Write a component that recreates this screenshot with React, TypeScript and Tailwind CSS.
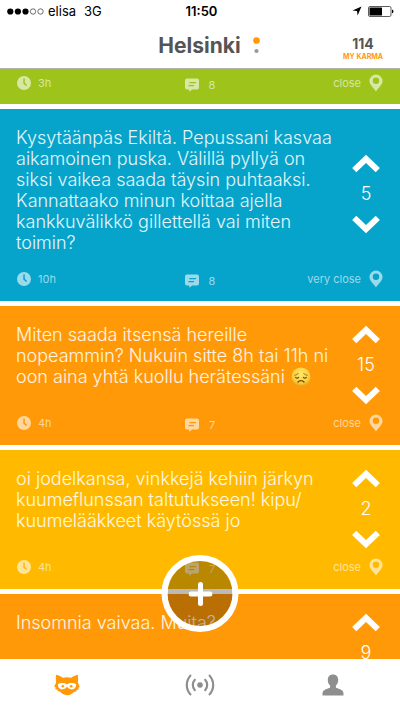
import React from "react";

type Tone = "green" | "blue" | "orange" | "yellow";

interface PostMeta {
  age: string;
  replies: number;
  distance: string;
}

interface Post {
  id: number;
  tone: Tone;
  lines: string[];
  sad?: boolean;
  votes: number;
  meta?: PostMeta;
}

const toneClass: Record<Tone, string> = {
  green: "bg-[#9ec41c]",
  blue: "bg-[#06a3cb]",
  orange: "bg-[#ff9908]",
  yellow: "bg-[#ffba00]",
};

const posts: Post[] = [
  {
    id: 1,
    tone: "blue",
    lines: [
      "Kysytäänpäs Ekiltä. Pepussani kasvaa",
      "aikamoinen puska. Välillä pyllyä on",
      "siksi vaikea saada täysin puhtaaksi.",
      "Kannattaako minun koittaa ajella",
      "kankkuvälikkö gillettellä vai miten",
      "toimin?",
    ],
    votes: 5,
    meta: { age: "10h", replies: 8, distance: "very close" },
  },
  {
    id: 2,
    tone: "orange",
    lines: [
      "Miten saada itsensä hereille",
      "nopeammin? Nukuin sitte 8h tai 11h ni",
      "oon aina yhtä kuollu herätessäni",
    ],
    sad: true,
    votes: 15,
    meta: { age: "4h", replies: 7, distance: "close" },
  },
  {
    id: 3,
    tone: "yellow",
    lines: [
      "oi jodelkansa, vinkkejä kehiin järkyn",
      "kuumeflunssan taltutukseen! kipu/",
      "kuumelääkkeet käytössä jo",
    ],
    votes: 2,
    meta: { age: "4h", replies: 7, distance: "close" },
  },
  {
    id: 4,
    tone: "orange",
    lines: ["Insomnia vaivaa. Muita?"],
    votes: 9,
  },
];

function ClockIcon() {
  return (
    <svg viewBox="0 0 14 14" className="size-3.5" aria-hidden="true">
      <path
        fill="currentColor"
        fillRule="evenodd"
        d="M7 0a7 7 0 1 0 0 14A7 7 0 0 0 7 0ZM6.3 2.6h1.5v4.2l2.3 2.1-1 1.1-2.8-2.5Z"
      />
    </svg>
  );
}

function CommentIcon() {
  return (
    <svg viewBox="0 0 14 14" className="size-3.5" aria-hidden="true">
      <path
        fill="currentColor"
        fillRule="evenodd"
        d="M2 .5h10a2 2 0 0 1 2 2v7a2 2 0 0 1-2 2H7L4.6 13.8 4 11.5H2a2 2 0 0 1-2-2v-7a2 2 0 0 1 2-2ZM4.4 4v1.3h6.6V4Zm-1 3v1.3h5.600V7Z"
      />
    </svg>
  );
}

function PinIcon() {
  return (
    <svg viewBox="0 0 14 18" className="h-[18px] w-3.5" aria-hidden="true">
      <path
        fill="currentColor"
        fillRule="evenodd"
        d="M7 .5A6.500 6.500 0 0 0 .5 7C.5 11 4.500 13.500 7 17.500 9.500 13.500 13.500 11 13.500 7A6.500 6.500 0 0 0 7 .5Zm0 3a3.200 3.200 0 1 1 0 6.400 3.200 3.200 0 0 1 0-6.400Z"
      />
    </svg>
  );
}

function Chevron({ down = false }: { down?: boolean }) {
  return (
    <svg viewBox="0 0 30 20" className="h-5 w-[30px]" aria-hidden="true">
      <path
        d={down ? "M3.200 3.800 15 15.200 26.800 3.800" : "M3.200 16.200 15 4.800 26.800 16.200"}
        fill="none"
        stroke="#fff"
        strokeWidth="6"
      />
    </svg>
  );
}

function SadFace() {
  return (
    <svg
      viewBox="0 0 20 20"
      role="img"
      aria-label="disappointed face"
      className="ml-1.5 inline-block size-5 align-text-bottom"
    >
      <defs>
        <radialGradient id="face" cx="50%" cy="35%" r="65%">
          <stop offset="0" stopColor="#ffe96b" />
          <stop offset="0.7" stopColor="#fbcf3c" />
          <stop offset="1" stopColor="#e69a1c" />
        </radialGradient>
      </defs>
      <circle cx="10" cy="10" r="9.500" fill="url(#face)" />
      <g fill="none" stroke="#6d4210" strokeLinecap="round">
        <path strokeWidth="0.700" d="M3.800 8.200C5.400 8 6.600 7.300 7.300 6.400M16.200 8.200C14.600 8 13.400 7.300 12.700 6.400" />
        <path strokeWidth="1.200" d="M4.600 10.400c1 .9 2.200.8 3 0M12.400 10.400c.8.800 2 .9 3 0" />
        <path strokeWidth="1.300" d="M7 15c1.500-1.900 4.500-1.900 6 0" />
      </g>
    </svg>
  );
}

function CardFooter({ age, replies, distance }: PostMeta) {
  return (
    <footer className="grid h-[18px] grid-cols-[1fr_auto_1fr] items-center px-[17px] text-[11px] leading-4 text-white/60">
      <span className="flex items-center gap-[7px]">
        <ClockIcon />
        {age}
      </span>
      <span className="flex items-center gap-2.5 pt-1">
        <CommentIcon />
        {replies}
      </span>
      <span className="flex items-center justify-end gap-2">
        {distance}
        <PinIcon />
      </span>
    </footer>
  );
}

function PostCard({ post }: { post: Post }) {
  return (
    <article className={"flex min-h-[139px] shrink-0 flex-col pb-3.5 " + toneClass[post.tone]}>
      <div className="flex flex-1">
        <p className="flex-1 whitespace-pre pt-[18px] pb-4 pl-4 text-[18px] leading-[21px] font-light text-white/90">
          {post.lines.join("\n")}
          {post.sad && <SadFace />}
        </p>
        <div className="flex w-[68px] shrink-0 flex-col items-center justify-center gap-[9px] pt-2.5 text-[18px] leading-[22px] font-light text-white">
          <button type="button" aria-label="Vote up">
            <Chevron />
          </button>
          <span>{post.votes}</span>
          <button type="button" aria-label="Vote down">
            <Chevron down />
          </button>
        </div>
      </div>
      {post.meta ? <CardFooter {...post.meta} /> : <div className="h-[18px]" />}
    </article>
  );
}

function StatusBar() {
  return (
    <div className="grid h-[22px] shrink-0 grid-cols-[1fr_auto_1fr] items-center pr-1.5 pl-[7px] text-[13px] leading-4 text-black">
      <div className="flex items-center">
        <svg viewBox="0 0 37 7" className="h-[7px] w-[37px]" aria-hidden="true">
          <circle cx="3.300" cy="3.500" r="3.100" />
          <circle cx="10.900" cy="3.500" r="3.100" />
          <circle cx="18.500" cy="3.500" r="3.100" />
          <circle cx="26" cy="3.500" r="2.700" fill="none" stroke="#333" strokeWidth="0.700" />
          <circle cx="33.500" cy="3.500" r="2.700" fill="none" stroke="#333" strokeWidth="0.700" />
        </svg>
        <span className="pl-1">elisa</span>
        <span className="pl-2">3G</span>
      </div>
      <span className="pl-0.5 font-semibold">11:50</span>
      <div className="flex items-center justify-end gap-1.5">
        <svg viewBox="0 0 10 10" className="size-2.5" aria-hidden="true">
          <path d="M9.500.5 5.600 9.500 5 5 .5 4.600Z" />
        </svg>
        <svg viewBox="0 0 26 11" className="h-[11px] w-[26px]" aria-hidden="true">
          <rect x="0.500" y="0.500" width="22.500" height="10" rx="1.500" fill="none" stroke="#333" strokeWidth="0.800" />
          <rect x="1.500" y="1.500" width="12.500" height="8" rx="0.500" />
          <path d="M24 3.600c2 .6 2 3.200 0 3.800Z" />
        </svg>
      </div>
    </div>
  );
}

function Header() {
  return (
    <header className="grid h-[47px] shrink-0 grid-cols-[1fr_auto_1fr] items-center border-b border-[#b5b5a5] pr-[17px] pl-4">
      <span />
      <h1 className="pt-0.5 text-[21px] leading-6 font-bold text-[#555]">Helsinki</h1>
      <div className="flex items-center justify-between pl-3">
        <svg viewBox="0 0 7 18" className="h-[18px] w-[7px]" aria-hidden="true">
          <circle cx="3.500" cy="4.500" r="3.300" fill="#ff9908" />
          <circle cx="3.500" cy="15" r="2.100" fill="#999" />
        </svg>
        <div className="flex flex-col items-center pt-1.5 font-bold">
          <span className="text-[14px] leading-4 text-[#555]">114</span>
          <span className="text-[7px] leading-[9px] text-[#ff9908]">MY KARMA</span>
        </div>
      </div>
    </header>
  );
}

function TabBar() {
  return (
    <nav className="grid h-[52px] shrink-0 grid-cols-3 items-center bg-white">
      <button type="button" aria-label="Feed" className="flex justify-center">
        <svg viewBox="0 0 26 22" className="h-[22px] w-[26px]" aria-hidden="true">
          <path
            fill="#ff9908"
            d="M2.200.8C4.800 1.400 7 2.400 8.800 3.800c2.800-.7 5.600-.7 8.400 0C19 2.400 21.200 1.400 23.800.8c.6 2.800.5 5 0 7.400l2 5-1.400.4.200 2-2 .4-.4 1.600-2 .4C18.400 19.400 16 21.300 13 21.300S7.600 19.400 5.800 17.600l-2-.4-.4-1.600-2-.4.200-2-1.400-.4 2-4.600C1.700 5.800 1.600 3.600 2.200.8Z"
          />
          <path
            fill="#fff"
            d="M3.800 10.200C6.400 8.600 10.400 8.800 13 10.400c2.600-1.600 6.600-1.800 9.200-.2 0 3.400-1.700 5.200-4.400 5.200-2.200 0-3.800-1-4.800-2.800-1 1.800-2.600 2.800-4.800 2.800-2.700 0-4.400-1.800-4.400-5.200Z"
          />
          <circle cx="8.800" cy="12.200" r="1.300" fill="#ff9908" />
          <circle cx="17.200" cy="12.200" r="1.300" fill="#ff9908" />
        </svg>
      </button>
      <button type="button" aria-label="Channels" className="flex justify-center">
        <svg viewBox="0 0 30 22" className="h-[22px] w-[30px]" aria-hidden="true">
          <circle cx="15" cy="11" r="2.800" fill="#8e8e8e" />
          <g fill="none" stroke="#8e8e8e" strokeWidth="2.200" strokeLinecap="round">
            <path d="M9.800 5.800c-2.600 3-2.600 7.400 0 10.400M20.200 5.800c2.600 3 2.600 7.400 0 10.400" />
            <path d="M5.400 1.600c-4.800 5.600-4.800 13.200 0 18.800M24.600 1.600c4.800 5.600 4.800 13.200 0 18.800" />
          </g>
        </svg>
      </button>
      <button type="button" aria-label="Profile" className="flex justify-center">
        <svg viewBox="0 0 22 22" className="size-[22px]" aria-hidden="true">
          <path
            fill="#8e8e8e"
            d="M11 .5c3.200 0 5.200 2.200 5.200 5.400 0 2.400-.9 4.400-2.300 5.700v1.900c1 1.200 7.600 1.500 7.600 6v2h-21v-2c0-4.500 6.600-4.800 7.600-6v-1.900C6.700 10.300 5.800 8.300 5.800 5.900 5.800 2.700 7.800.5 11 .5Z"
          />
        </svg>
      </button>
    </nav>
  );
}

export default function App() {
  return (
    <div className="relative flex h-screen flex-col overflow-hidden bg-white font-['Inter','Liberation_Sans',sans-serif]">
      <StatusBar />
      <Header />
      <main className="flex min-h-0 flex-1 flex-col gap-[5px] overflow-hidden">
        <article className={"shrink-0 pt-1 pb-[13px] " + toneClass.green}>
          <CardFooter age="3h" replies={8} distance="close" />
        </article>
        {posts.map((post) => (
          <PostCard key={post.id} post={post} />
        ))}
      </main>
      <TabBar />
      <button
        type="button"
        aria-label="New post"
        className="absolute bottom-[79px] left-1/2 flex size-[77px] -translate-x-1/2 items-center justify-center rounded-full border-6 border-white bg-black/27 bg-clip-padding"
      >
        <svg viewBox="0 0 24 24" className="size-6" aria-hidden="true">
          <path d="M12 2.500v19M2.500 12h19" stroke="#fff" strokeWidth="5" strokeLinecap="round" />
        </svg>
      </button>
    </div>
  );
}
